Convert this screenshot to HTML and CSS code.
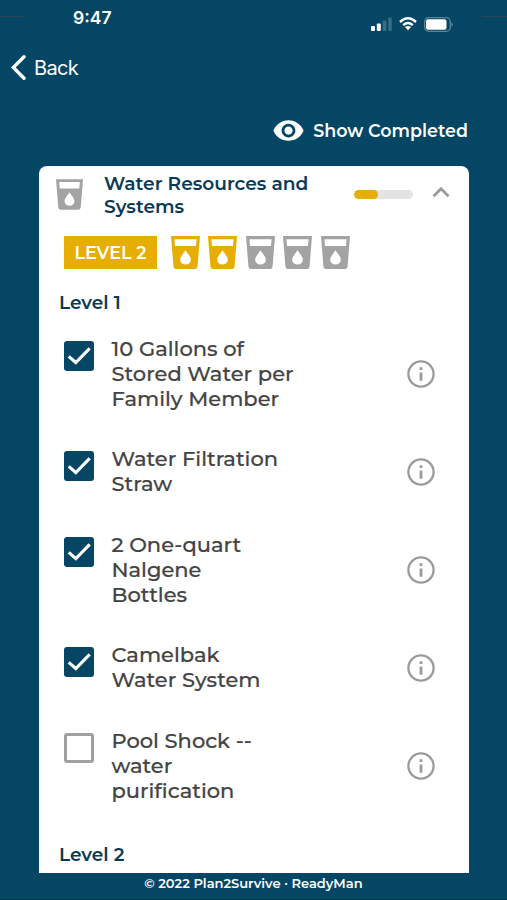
FILE: index.html
```
<!DOCTYPE html>
<html lang="en">
<head>
<meta charset="utf-8">
<meta name="viewport" content="width=device-width, initial-scale=1">
<title>Water Resources and Systems</title>
<link rel="stylesheet" href="styles.css">
</head>
<body>
<svg class="defs" aria-hidden="true">
  <symbol id="cup" viewBox="0 0 29 33">
    <path fill="currentColor" fill-rule="evenodd" d="M0 0H29L26.600 30.200Q26.300 33 23.600 33H5.400Q2.700 33 2.400 30.200ZM3.400 3.200L4 10H25L25.600 3.200ZM14.500 14.200C13 17 9.200 20.400 9.200 23.700A5.300 4.900 0 0 0 19.800 23.700C19.800 20.400 16 17 14.500 14.200Z"/>
  </symbol>
  <symbol id="info" viewBox="0 0 28 28">
    <circle cx="14" cy="14" r="12.600" fill="none" stroke="currentColor" stroke-width="2.300"/>
    <path fill="currentColor" d="M12.600 7.300h2.800v2.600h-2.800zM12.600 12.600h2.800v8.200h-2.800z"/>
  </symbol>
  <symbol id="check" viewBox="0 0 30 30">
    <path fill="none" stroke="#fff" stroke-width="3.100" d="M4.700 15.300L11.800 21.500L25.700 7.400"/>
  </symbol>
</svg>
<div class="app">
  <header class="status">
    <i class="trace"></i>
    <span class="clock">9:47</span>
    <div class="signals">
      <svg width="21" height="14" viewBox="0 0 21 14" fill="#fff"><rect y="9" width="4" height="5" rx="1"/><rect x="5.800" y="6.500" width="4" height="7.500" rx="1"/><rect x="11.800" y="3.500" width="3.600" height="10.500" rx="1" opacity=".22"/><rect x="17.300" y=".5" width="3.400" height="13.500" rx="1" opacity=".22"/></svg>
      <svg width="18" height="14" viewBox="0 0 18 14" fill="none" stroke="#fff" stroke-width="2.400"><path d="M1 5Q9-2.400 17 5M4.200 8.200Q9 4 13.800 8.200"/><path fill="#fff" stroke="none" d="M5.900 10.100Q9 7.900 12.100 10.100L9 13.300Z"/></svg>
      <svg width="29" height="15" viewBox="0 0 29 15"><rect x=".7" y=".7" width="25.600" height="13.600" rx="4" fill="none" stroke="#fff" stroke-opacity=".35" stroke-width="1.300"/><rect x="2" y="2.300" width="20.500" height="10.400" rx="2" fill="#fff"/><path d="M27.500 5.200Q30 7.500 27.500 9.800Z" fill="#fff" opacity=".4"/></svg>
    </div>
    <i class="trace"></i>
  </header>
  <nav class="back">
    <svg width="15" height="25" viewBox="0 0 15 25"><path d="M13 1.800L2.300 12.500L13 23.200" fill="none" stroke="#fff" stroke-width="3.400" stroke-linecap="round"/></svg>
    <span>Back</span>
  </nav>
  <div class="toggle">
    <svg width="33" height="33" viewBox="0 0 24 24" fill="#fff"><path d="M12 4.500C7 4.500 2.730 7.610 1 12c1.730 4.390 6 7.500 11 7.500s9.270-3.110 11-7.500c-1.730-4.390-6-7.500-11-7.500zM12 17c-2.760 0-5-2.240-5-5s2.240-5 5-5 5 2.240 5 5-2.240 5-5 5zm0-8c-1.660 0-3 1.340-3 3s1.340 3 3 3 3-1.340 3-3-1.340-3-3-3z"/></svg>
    <span>Show Completed</span>
  </div>
  <main class="card">
    <div class="card-head">
      <svg class="head-cup"><use href="#cup"/></svg>
      <h1>Water Resources and<br>Systems</h1>
      <div class="progress"><div class="bar"></div></div>
      <svg class="chevron" width="18" height="12" viewBox="0 0 18 12"><path d="M1.500 10.200L9 2.700L16.500 10.200" fill="none" stroke="#9c9c9c" stroke-width="2.900"/></svg>
    </div>
    <div class="levels">
      <span class="badge">LEVEL 2</span>
      <div class="cups">
        <svg class="on"><use href="#cup"/></svg>
        <svg class="on"><use href="#cup"/></svg>
        <svg><use href="#cup"/></svg>
        <svg><use href="#cup"/></svg>
        <svg><use href="#cup"/></svg>
      </div>
    </div>
    <h2>Level 1</h2>
    <ul class="items">
      <li><span class="box checked"><svg><use href="#check"/></svg></span><p>10 Gallons of<br>Stored Water per<br>Family Member</p><svg class="info"><use href="#info"/></svg></li>
      <li><span class="box checked"><svg><use href="#check"/></svg></span><p>Water Filtration<br>Straw</p><svg class="info"><use href="#info"/></svg></li>
      <li><span class="box checked"><svg><use href="#check"/></svg></span><p>2 One-quart<br>Nalgene<br>Bottles</p><svg class="info"><use href="#info"/></svg></li>
      <li><span class="box checked"><svg><use href="#check"/></svg></span><p>Camelbak<br>Water System</p><svg class="info"><use href="#info"/></svg></li>
      <li><span class="box"></span><p>Pool Shock --<br>water<br>purification</p><svg class="info"><use href="#info"/></svg></li>
    </ul>
    <h2>Level 2</h2>
  </main>
  <footer>© 2022 Plan2Survive · ReadyMan</footer>
</div>
</body>
</html>
```
FILE: styles.css
```
* { box-sizing: border-box; }
body {
  margin: 0;
  background: #044663;
  color: #fff;
  font-family: Montserrat, Inter, sans-serif;
}
svg { display: block; flex: none; }
.defs { display: none; }
h1, h2, p, ul { margin: 0; padding: 0; }
.app {
  display: flex;
  flex-direction: column;
  height: 900px;
  overflow: hidden;
  border-bottom: 1px solid #043650;
}
.status { display: flex; height: 48px; }
.trace { flex: none; width: 25px; height: 1px; margin-top: 16px; background: #2d4454; }
.clock {
  margin-left: 48px;
  padding-top: 7px;
  font-family: Inter, sans-serif;
  font-size: 17.5px;
  line-height: 22px;
  font-weight: 600;
}
.signals { display: flex; gap: 7px; margin: 17px 29px 0 auto; }
.back { display: flex; align-items: center; gap: 8px; height: 39px; margin-bottom: 1px; padding-left: 11px; }
.back span { font-family: Inter, sans-serif; font-size: 20px; letter-spacing: -.7px; }
.toggle {
  display: flex;
  align-items: center;
  justify-content: flex-end;
  gap: 8px;
  height: 33px;
  margin: 25.500px 39px 19.500px 0;
  font-size: 17.5px;
  font-weight: 600;
}
.toggle span { line-height: 33px; }
.card {
  display: flex;
  flex-direction: column;
  flex: none;
  width: 430px;
  height: 707px;
  margin-left: 39px;
  overflow: hidden;
  background: #fff;
  border-radius: 8px 8px 0 0;
}
.card-head { display: flex; height: 70px; padding-left: 17px; }
.head-cup { width: 27px; height: 31px; margin-top: 13px; color: #a3a3a3; }
h1 {
  width: 228px;
  margin: 6px 0 0 21px;
  color: #0b3a56;
  font-size: 18.6px;
  font-weight: 600;
  line-height: 23px;
  white-space: nowrap;
}
.progress { width: 59px; height: 9px; margin: 24px 0 0 22px; border-radius: 5px; background: #e3e3e3; overflow: hidden; }
.bar { width: 24px; height: 100%; border-radius: 5px; background: #e6ae00; }
.chevron { margin: 20px 0 0 19px; }
.levels { display: flex; height: 33px; padding-left: 25px; }
.badge {
  width: 93px;
  background: #e6ae00;
  font-size: 17.6px;
  font-weight: 600;
  line-height: 33px;
  text-align: center;
}
.cups { display: flex; gap: 8.500px; margin-left: 13.500px; color: #a3a3a3; }
.cups svg { width: 29px; height: 33px; }
.cups .on { color: #e6ae00; }
h2 {
  padding-left: 20px;
  color: #0b3a56;
  font-size: 18.5px;
  font-weight: 600;
  line-height: 24px;
}
.levels + h2 { margin-top: 22px; }
.items { margin: 4px 0 22px; list-style: none; }
li { display: flex; align-items: center; min-height: 86px; padding: 17.500px 34px 17.500px 25px; }
.box { align-self: flex-start; flex: none; width: 30px; height: 30px; margin-top: 4.500px; border: 3px solid #a0a0a0; border-radius: 3px; }
.checked { border: 0; background: #044663; }
.checked svg { width: 30px; height: 30px; }
li p {
  margin: -1px 0 1px 17.500px;
  color: #444;
  font-size: 21px;
  font-weight: 500;
  font-variant-ligatures: none;
  line-height: 25px;
  white-space: nowrap;
  -webkit-text-stroke: .2px #444;
}
.info { width: 28px; height: 28px; margin: -.5px 0 .5px auto; color: #9b9b9b; }
footer { font-size: 13.050px; font-weight: 600; line-height: 20px; text-align: center; }
```
